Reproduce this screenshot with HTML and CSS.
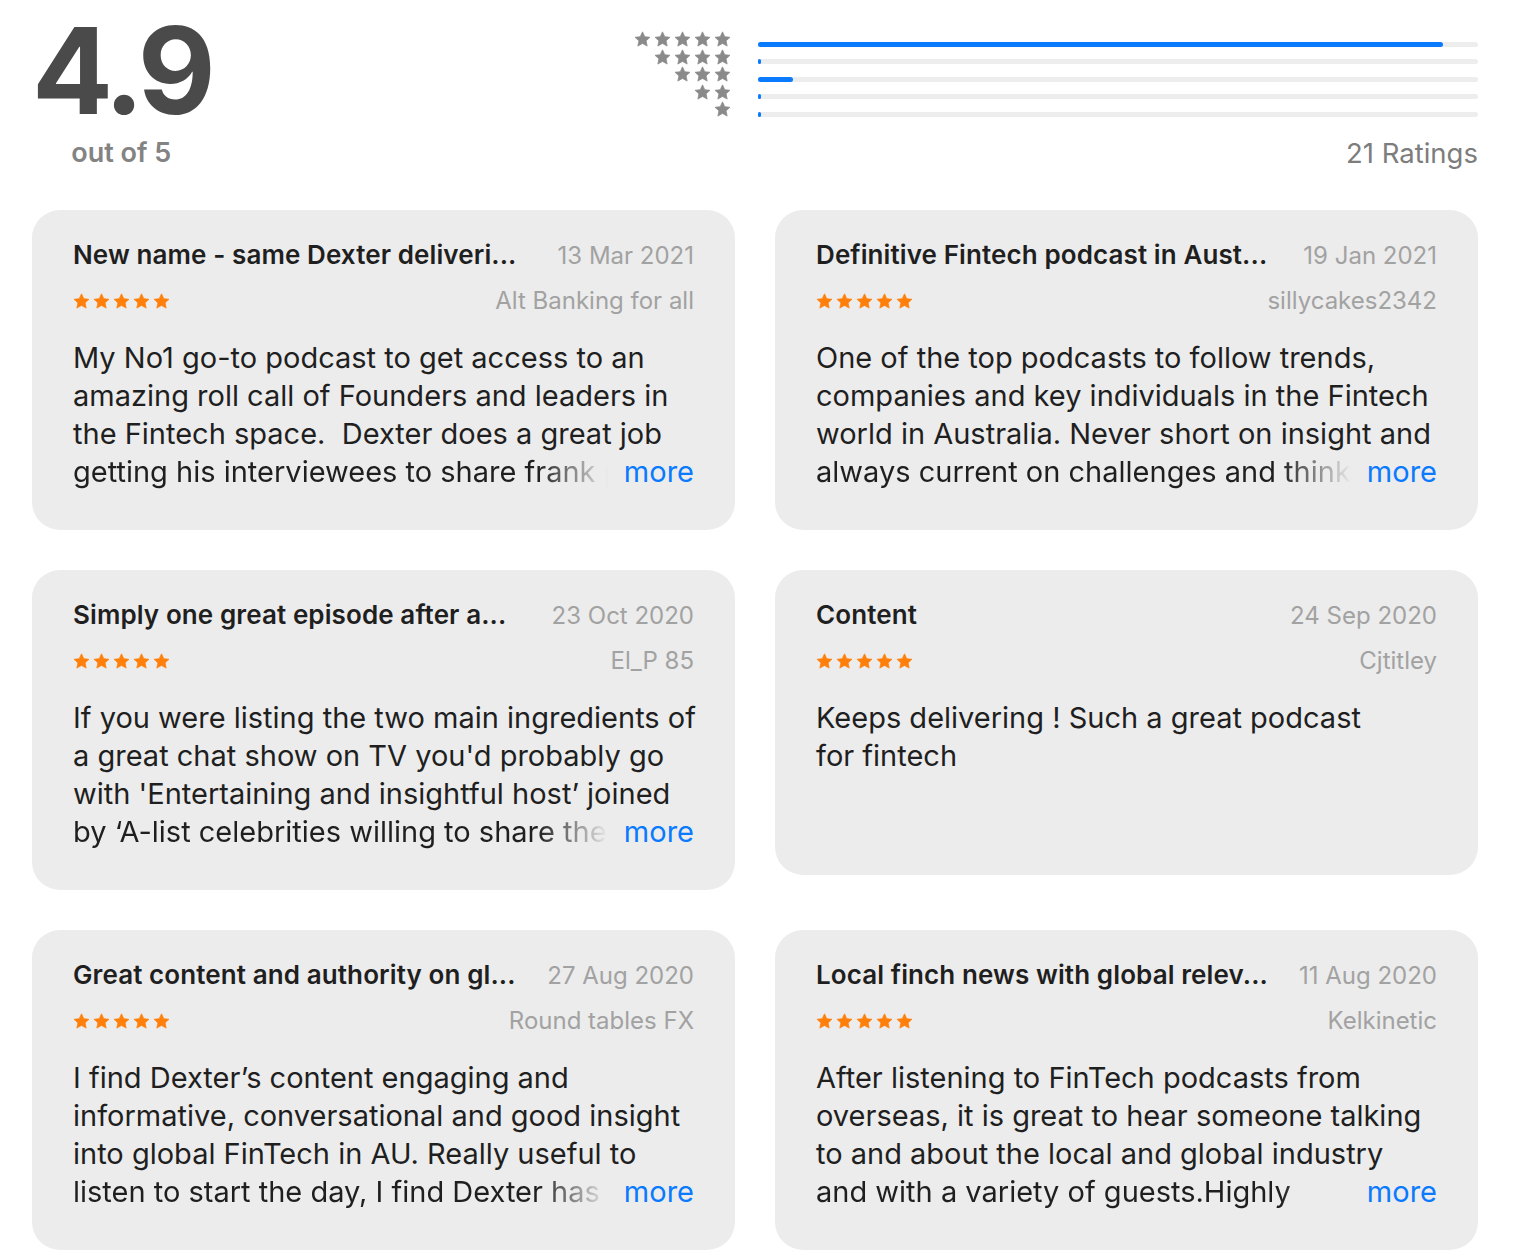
FILE: index.html
```html
<!DOCTYPE html>
<html lang="en">
<head>
    <meta charset="UTF-8">
    <meta name="viewport" content="width=device-width, initial-scale=1.0">
    <title>Ratings and Reviews</title>
    <link rel="stylesheet" href="styles.css">
</head>
<body>

    <svg class="defs" width="0" height="0">
        <symbol id="star" viewBox="0 0 24 24">
            <polygon points="12,1.2 15.2,8.0 22.6,8.85 17.1,13.9 18.6,21.3 12,17.6 5.4,21.3 6.9,13.9 1.4,8.85 8.8,8.0" stroke-linejoin="round" stroke-width="1"/>
        </symbol>
    </svg>

    <div class="page">
        <div class="summary">
            <div class="score">
                <div class="score-value">4.9</div>
                <div class="score-label">out of 5</div>
            </div>

            <div class="histogram">
                <div class="rows">
                    <div class="row">
                        <div class="row-stars">
                            <svg><use href="#star"/></svg><svg><use href="#star"/></svg><svg><use href="#star"/></svg><svg><use href="#star"/></svg><svg><use href="#star"/></svg>
                        </div>
                        <div class="bar"><div class="fill" style="width: 95.2%"></div></div>
                    </div>
                    <div class="row">
                        <div class="row-stars">
                            <svg><use href="#star"/></svg><svg><use href="#star"/></svg><svg><use href="#star"/></svg><svg><use href="#star"/></svg>
                        </div>
                        <div class="bar"><div class="fill" style="width: 0%"></div></div>
                    </div>
                    <div class="row">
                        <div class="row-stars">
                            <svg><use href="#star"/></svg><svg><use href="#star"/></svg><svg><use href="#star"/></svg>
                        </div>
                        <div class="bar"><div class="fill" style="width: 4.8%"></div></div>
                    </div>
                    <div class="row">
                        <div class="row-stars">
                            <svg><use href="#star"/></svg><svg><use href="#star"/></svg>
                        </div>
                        <div class="bar"><div class="fill" style="width: 0%"></div></div>
                    </div>
                    <div class="row">
                        <div class="row-stars">
                            <svg><use href="#star"/></svg>
                        </div>
                        <div class="bar"><div class="fill" style="width: 0%"></div></div>
                    </div>
                </div>
                <div class="count">21 Ratings</div>
            </div>
        </div>

        <div class="reviews">
            <div class="card">
                <div class="card-head">
                    <div class="title">New name - same Dexter deliveri...</div>
                    <div class="date">13 Mar 2021</div>
                </div>
                <div class="card-meta">
                    <div class="stars"><svg><use href="#star"/></svg><svg><use href="#star"/></svg><svg><use href="#star"/></svg><svg><use href="#star"/></svg><svg><use href="#star"/></svg></div>
                    <div class="author">Alt Banking for all</div>
                </div>
                <div class="text">
                    My No1 go-to podcast to get access to an<br>
                    amazing roll call of Founders and leaders in<br>
                    the Fintech space.&nbsp; Dexter does a great job
                    <div class="last-line">
                        <span class="clip">getting his interviewees to share frank perspectives</span>
                        <a class="more" href="#">more</a>
                    </div>
                </div>
            </div>

            <div class="card">
                <div class="card-head">
                    <div class="title">Definitive Fintech podcast in Aust...</div>
                    <div class="date">19 Jan 2021</div>
                </div>
                <div class="card-meta">
                    <div class="stars"><svg><use href="#star"/></svg><svg><use href="#star"/></svg><svg><use href="#star"/></svg><svg><use href="#star"/></svg><svg><use href="#star"/></svg></div>
                    <div class="author">sillycakes2342</div>
                </div>
                <div class="text">
                    One of the top podcasts to follow trends,<br>
                    companies and key individuals in the Fintech<br>
                    world in Australia. Never short on insight and
                    <div class="last-line">
                        <span class="clip">always current on challenges and thinking</span>
                        <a class="more" href="#">more</a>
                    </div>
                </div>
            </div>

            <div class="card">
                <div class="card-head">
                    <div class="title">Simply one great episode after a...</div>
                    <div class="date">23 Oct 2020</div>
                </div>
                <div class="card-meta">
                    <div class="stars"><svg><use href="#star"/></svg><svg><use href="#star"/></svg><svg><use href="#star"/></svg><svg><use href="#star"/></svg><svg><use href="#star"/></svg></div>
                    <div class="author">El_P 85</div>
                </div>
                <div class="text">
                    If you were listing the two main ingredients of<br>
                    a great chat show on TV you'd probably go<br>
                    with 'Entertaining and insightful host’ joined
                    <div class="last-line">
                        <span class="clip">by ‘A-list celebrities willing to share their</span>
                        <a class="more" href="#">more</a>
                    </div>
                </div>
            </div>

            <div class="card short">
                <div class="card-head">
                    <div class="title">Content</div>
                    <div class="date">24 Sep 2020</div>
                </div>
                <div class="card-meta">
                    <div class="stars"><svg><use href="#star"/></svg><svg><use href="#star"/></svg><svg><use href="#star"/></svg><svg><use href="#star"/></svg><svg><use href="#star"/></svg></div>
                    <div class="author">Cjtitley</div>
                </div>
                <div class="text">
                    Keeps delivering ! Such a great podcast<br>
                    for fintech
                </div>
            </div>

            <div class="card">
                <div class="card-head">
                    <div class="title">Great content and authority on gl...</div>
                    <div class="date">27 Aug 2020</div>
                </div>
                <div class="card-meta">
                    <div class="stars"><svg><use href="#star"/></svg><svg><use href="#star"/></svg><svg><use href="#star"/></svg><svg><use href="#star"/></svg><svg><use href="#star"/></svg></div>
                    <div class="author">Round tables FX</div>
                </div>
                <div class="text">
                    I find Dexter’s content engaging and<br>
                    informative, conversational and good insight<br>
                    into global FinTech in AU. Really useful to
                    <div class="last-line">
                        <span class="clip">listen to start the day, I find Dexter has</span>
                        <a class="more" href="#">more</a>
                    </div>
                </div>
            </div>

            <div class="card">
                <div class="card-head">
                    <div class="title">Local finch news with global relev...</div>
                    <div class="date">11 Aug 2020</div>
                </div>
                <div class="card-meta">
                    <div class="stars"><svg><use href="#star"/></svg><svg><use href="#star"/></svg><svg><use href="#star"/></svg><svg><use href="#star"/></svg><svg><use href="#star"/></svg></div>
                    <div class="author">Kelkinetic</div>
                </div>
                <div class="text">
                    After listening to FinTech podcasts from<br>
                    overseas, it is great to hear someone talking<br>
                    to and about the local and global industry
                    <div class="last-line">
                        <span class="clip">and with a variety of guests.Highly</span>
                        <a class="more" href="#">more</a>
                    </div>
                </div>
            </div>
        </div>
    </div>

</body>
</html>
```

FILE: styles.css
```css
* {
    margin: 0;
    padding: 0;
    box-sizing: border-box;
}
body {
    font-family: Inter, "Liberation Sans", sans-serif;
    background-color: #ffffff;
    color: #1f1f1f;
    overflow: hidden;
}
.defs {
    position: absolute;
}
.page {
    width: 1446px;
    margin-left: 32px;
}
.summary {
    display: flex;
    justify-content: space-between;
    align-items: flex-start;
    height: 170px;
}
.score {
    display: flex;
    flex-direction: column;
    align-items: center;
    padding-top: 11px;
}
.score-value {
    font-size: 120px;
    line-height: 120px;
    font-weight: 700;
    letter-spacing: -5px;
    color: #4a4a4a;
}
.score-label {
    margin-top: 6px;
    font-size: 27px;
    line-height: 32px;
    font-weight: 600;
    color: #838383;
}
.histogram {
    padding-top: 31px;
    display: flex;
    flex-direction: column;
    align-items: flex-end;
}
.rows {
    display: flex;
    flex-direction: column;
}
.row {
    display: flex;
    align-items: center;
    height: 17.5px;
    gap: 27px;
}
.row-stars {
    width: 98px;
    display: flex;
    justify-content: flex-end;
    gap: 3px;
}
.row-stars svg {
    width: 17px;
    height: 17px;
    fill: #8a8a8a;
    stroke: #8a8a8a;
}
.bar {
    width: 720px;
    height: 5px;
    margin-top: 9px;
    background-color: #ededed;
    border-radius: 0 3px 3px 0;
    overflow: hidden;
}
.fill {
    height: 100%;
    min-width: 3px;
    background-color: #0a7aff;
    border-radius: 3px;
}
.count {
    margin-top: 18px;
    font-size: 27.5px;
    line-height: 32px;
    color: #7d7d7d;
}
.reviews {
    display: grid;
    grid-template-columns: 703px 703px;
    column-gap: 40px;
    row-gap: 40px;
    align-items: start;
    padding-top: 40px;
}
.card {
    height: 320px;
    background-color: #ececec;
    border-radius: 28px;
    padding: 30px 41px 0;
}
.card.short {
    height: 305px;
}
.card-head {
    display: flex;
    justify-content: space-between;
    align-items: baseline;
    gap: 28px;
}
.title {
    font-size: 26px;
    line-height: 30px;
    font-weight: 600;
    letter-spacing: 0.1px;
    color: #1f1f1f;
    white-space: nowrap;
    overflow: hidden;
    text-overflow: ellipsis;
    min-width: 0;
}
.date {
    flex-shrink: 0;
    font-size: 24px;
    line-height: 30px;
    color: #a2a2a2;
}
.card-meta {
    display: flex;
    justify-content: space-between;
    align-items: center;
    height: 30px;
    margin-top: 15px;
}
.stars {
    display: flex;
    gap: 3px;
}
.stars svg {
    width: 17px;
    height: 17px;
    fill: #ff7f0a;
    stroke: #ff7f0a;
}
.author {
    font-size: 24px;
    line-height: 30px;
    color: #a2a2a2;
}
.text {
    margin-top: 23px;
    font-size: 29px;
    line-height: 38px;
    color: #1f1f1f;
    white-space: nowrap;
}
.last-line {
    display: flex;
    align-items: baseline;
}
.clip {
    flex: 1;
    min-width: 0;
    overflow: hidden;
    white-space: nowrap;
    -webkit-mask-image: linear-gradient(to right, #000 calc(100% - 70px), transparent 100%);
    mask-image: linear-gradient(to right, #000 calc(100% - 70px), transparent 100%);
}
.more {
    margin-left: 16px;
    color: #0a7aff;
    text-decoration: none;
}
```
